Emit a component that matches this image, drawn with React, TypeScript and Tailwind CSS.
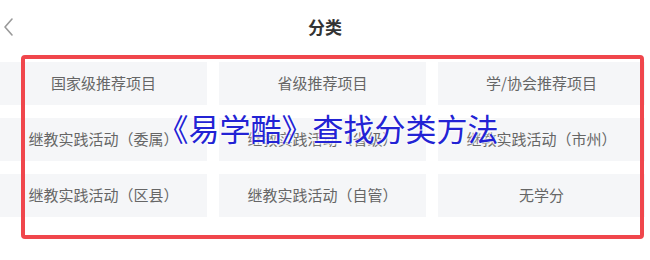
import React from 'react';

const items = [
  '国家级推荐项目',
  '省级推荐项目',
  '学/协会推荐项目',
  '继教实践活动（委属）',
  '继教实践活动（省级）',
  '继教实践活动（市州）',
  '继教实践活动（区县）',
  '继教实践活动（自管）',
  '无学分',
];

const App: React.FC = () => {
  return (
    <div
      className="relative w-[650px] h-[260px] overflow-hidden bg-white"
      style={{ fontFamily: '"Noto Sans CJK SC", "Noto Sans", sans-serif' }}
    >
      {/* Header */}
      <div className="grid grid-cols-[40px_1fr_40px] items-center h-[55px]">
        <svg width="14" height="20" viewBox="0 0 14 20" className="ml-[2px] -mt-[2px]">
          <path d="M10 2 L3 10 L10 18" fill="none" stroke="#9a9a9a" strokeWidth="1.6" strokeLinecap="round" strokeLinejoin="round" />
        </svg>
        <div className="text-center text-[17px] font-bold text-[#333] leading-none -mt-[2px]">分类</div>
        <div />
      </div>

      {/* Category grid */}
      <div className="mt-[7px] grid grid-cols-[207px_207px_207px] gap-x-[12px] gap-y-[13px]">
        {items.map((t) => (
          <div
            key={t}
            className="h-[43px] flex items-center justify-center bg-[#f5f6f8] text-[15px] text-[#666] whitespace-nowrap overflow-hidden"
          >
            {t}
          </div>
        ))}
      </div>

      {/* Red annotation frame */}
      <div className="absolute left-[21px] top-[55px] w-[623px] h-[184px] border-[4px] border-[#f0464c] rounded-[4px]" />

      {/* Caption overlay */}
      <div
        className="absolute left-0 right-0 top-[108px] text-center text-[31px] leading-[40px] text-[#2323d4] pl-[6px]"
        style={{ textShadow: '0 0 3px #fff, 0 0 3px #fff, 0 0 2px #fff' }}
      >
        《易学酷》查找分类方法
      </div>
    </div>
  );
};

export default App;
